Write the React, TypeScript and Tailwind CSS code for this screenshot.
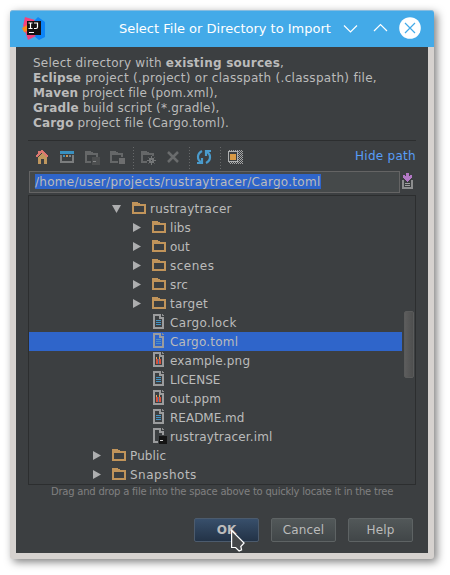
import React from 'react';

function IdeaLogo() {
  return (
    <svg width="24" height="24" viewBox="0 0 24 24" className="block shrink-0">
      <path d="M3 0l10 3-4 8-4 2-4-4z" fill="#f8417a" />
      <path d="M0 11l5-3v8l-3-1z" fill="#fc8b1c" />
      <path d="M12 4l4-4 7 5v15l-6 3-5-4z" fill="#0d84f6" />
      <path d="M3 14l6 2 5 3-8 4z" fill="#f0417f" />
      <rect x="5" y="4" width="14" height="14" fill="#151113" />
      <path d="M6.500 6h4M8.500 6v5.500M6.500 11.500h4M12 6h3.500v4q0 1.500-1.500 1.500h-2M7 15.500h5" stroke="#fff" strokeWidth="1.2" fill="none" />
    </svg>
  );
}

function Folder() {
  return (
    <svg width="14" height="12" viewBox="0 0 14 12" className="mb-px block shrink-0" shapeRendering="crispEdges">
      <path fillRule="evenodd" d="M0 0h6v1h2v1h6v10H0zM2 4v6h10V4z" fill="#c1945a" />
    </svg>
  );
}

type Kind = 'text' | 'image' | 'module';

function FileIcon({ kind, selected }: { kind: Kind; selected?: boolean }) {
  return (
    <svg width="15" height="16" viewBox="0 0 15 16" className="block shrink-0" shapeRendering="crispEdges">
      <path fillRule="evenodd" d="M0 0h8v3h3v12H0zM2 2v11h7V5H6V2z" fill="#9b9c9d" />
      <path d="M9 0h1v1h1v1H9z" fill="#8b8c8d" />
      {kind === 'text' && <path d="M3 6h5v1H3zM3 8h5v1H3zM3 10h5v1H3z" fill={selected ? '#4d8fc6' : '#4494c4'} />}
      {kind === 'image' && (
        <g>
          <path d="M3 7h2v5H3zM6 7h2v5H6z" fill="#d9513a" />
          <path d="M5 7h1v5H5z" fill="#3573a0" />
          <path d="M3 5h1v2H3zM6 5h1v2H6z" fill="#e5a65c" />
        </g>
      )}
      {kind === 'module' && (
        <g>
          <path d="M5 7h10v9H5z" fill="#3c3f41" />
          <path d="M6 8h8v8H6z" fill="#141414" />
          <path d="M7 12h3v1H7z" fill="#d0d0d0" />
        </g>
      )}
    </svg>
  );
}

function Arrow({ open }: { open?: boolean }) {
  return open ? (
    <svg width="9" height="8" viewBox="0 0 9 8" className="-ml-px mt-px block shrink-0"><path d="M0 0h9L4.5 8z" fill="#adaeaf" /></svg>
  ) : (
    <svg width="8" height="9" viewBox="0 0 8 9" className="block shrink-0"><path d="M0 0v9l8-4.5z" fill="#adaeaf" /></svg>
  );
}

function FolderRow({ name, className, open }: { name: string; className: string; open?: boolean }) {
  return (
    <div className={`flex h-[19px] items-center ${className}`}>
      <div className="w-[19px]"><Arrow open={open} /></div>
      <Folder />
      <span className="ml-1 pt-[2px] leading-[19px]">{name}</span>
    </div>
  );
}

function FileRow({ name, kind, selected, className = '' }: { name: string; kind: Kind; selected?: boolean; className?: string }) {
  return (
    <div className={`flex h-[19px] w-[373px] items-center pl-[124px] ${selected ? 'bg-[#2f65ca]' : ''}`}>
      <div className="w-[17px] pb-px"><FileIcon kind={kind} selected={selected} /></div>
      <span className={`pt-[2px] leading-[19px] ${className}`}>{name}</span>
    </div>
  );
}

function Toolbar() {
  return (
    <svg width="215" height="23" viewBox="0 0 215 23" className="block" shapeRendering="crispEdges">
      <g transform="translate(8 4)">
        <path d="M2 7l4-4 4 4h1v7H8V9H5v5H2z" fill="#bf975e" />
        <path d="M5 9h3v5H5z" fill="#3c3f41" />
        <path d="M2 1h2v4H2zM5 0h2v1h1v1h1v1h1v1h1v1h1v2h-2V6H9V5H8V4H7V3H5v1H4v1H3v1H2v1H0V5h1V4h1V3h1V2h1V1h1z" fill="#dd7770" />
      </g>
      <g transform="translate(32 5)">
        <path d="M0 0h14v3H0z" fill="#3990c0" />
        <path d="M0 4h2v6h10V4h2v8H0z" fill="#7b7d7e" />
        <path d="M3 4h2v2H3z" fill="#3990c0" /><path d="M6 4h2v2H6z" fill="#c1945a" /><path d="M9 4h2v2H9z" fill="#73868f" />
      </g>
      <g transform="translate(57 5)">
        <path d="M0 0h6v1h2v1h5v4h-2V4H2v6h4v2H0z" fill="#656768" />
        <path d="M7 6h8v8H7z" fill="#4d4f50" /><path d="M8 10h3v1H8z" fill="#858788" />
      </g>
      <g transform="translate(82 5)">
        <path d="M0 0h6v1h2v1h5v4h-2V4H2v6h6v2H0z" fill="#656768" />
        <path d="M9 7h6v6H9z" fill="#6d6e6f" />
      </g>
      <g transform="translate(113 5)">
        <path d="M0 0h6v1h2v1h5v3h-2V4H2v6h4v2H0z" fill="#656768" />
        <path d="M10.500 5v9M6 9.500h9M7.500 6.500l6 6M13.500 6.500l-6 6" stroke="#747677" strokeWidth="1" shapeRendering="auto" />
        <path d="M8 7h5v5H8z" fill="#747677" /><path d="M10 9h1v1h-1z" fill="#3c3f41" />
      </g>
      <path d="M140 6l10 10M150 6l-10 10" stroke="#6a6c6d" strokeWidth="2.5" shapeRendering="auto" />
      <g fill="none" stroke="#4a9bcc" strokeWidth="2.2" shapeRendering="auto">
        <path d="M173.500 16.500c-5-3-4.500-9 .5-11.500M169 17h5v-5M178.500 5.500c5 3 4.500 9-.5 11.500M183 5h-5v5" />
      </g>
      <g>
        {Array.from({ length: 14 }, (_, y) => (
          <path key={y} d={`M${201 + (y % 2)} ${4.5 + y}h14`} stroke="#a4a5a5" strokeDasharray="1 1" />
        ))}
        <path d="M200 5h10v11h-10z" fill="#aeb0b1" /><path d="M201 6h8v9h-8z" fill="#3c3f41" /><path d="M202 8h6v6h-6z" fill="#d99a45" />
      </g>
      <path d="M105.5 1v22M161.5 1v22M192.5 1v22" stroke="#67696a" strokeDasharray="1 2" />
    </svg>
  );
}

const button =
  'flex h-6 w-[65px] items-center justify-center rounded-[2px] border border-[#5e6364] bg-linear-to-b from-[#525859] to-[#414648] tracking-[0.1px]';

export default function App() {
  return (
    <div className="h-[575px] w-[450px] overflow-hidden bg-white pl-[10px] pt-[10px] font-['DejaVu_Sans',sans-serif] text-[12px] text-[#bbbbbb] whitespace-pre">
      <div className="relative flex h-[549px] w-[424px] flex-col rounded-[3px] bg-[#d6d2cf] shadow-[3px_3px_8px_0px_rgba(0,0,0,0.5)]">
        <div className="flex h-[37px] items-center rounded-t-[3px] border-t border-[#86bce0] bg-[#43aae8] pl-3 text-[13px] text-white">
          <IdeaLogo />
          <span className="ml-[73px] w-[214px]">Select File or Directory to Import</span>
          <svg width="90" height="24" viewBox="0 0 90 24" className="mb-[2px] block shrink-0" fill="none">
            <path d="M11 9.500l6.500 6.500 6.500-6.500M41 15l6.500-6.500L54 15" stroke="#fff" strokeWidth="1.2" />
            <circle cx="77" cy="12" r="10.800" fill="#fff" />
            <path d="M72 7l10 10M82 7L72 17" stroke="#43aae8" strokeWidth="1.2" />
          </svg>
        </div>
        <div className="mx-[6px] h-[506px] bg-[#3c3f41] pl-3">
          <div className="h-[93px] pl-[5px] pt-[9px] leading-[15px]">
            <div className="tracking-[0.235px]">Select directory with <b>existing sources</b>,</div>
            <div className="tracking-[0.29px]"><b className="tracking-[0.1px]">Eclipse</b> project (.project) or classpath (.classpath) file,</div>
            <div className="tracking-[0.1px]"><b>Maven</b> project file (pom.xml),</div>
            <div className="tracking-[0.2px]"><b>Gradle</b> build script (*.gradle),</div>
            <div className="tracking-[0.18px]"><b>Cargo</b> project file (Cargo.toml).</div>
          </div>
          <div className="h-px w-[388px] bg-[#2c2e2f]" />
          <div className="flex h-[30px] w-[388px] justify-between pt-[5px]">
            <Toolbar />
            <span className="leading-[20px] tracking-[0.28px] text-[#589df6]">Hide path</span>
          </div>
          <div className="flex h-6 pl-px">
            <div className="h-[22px] w-[371px] border border-[#646464] bg-[#45494a] p-[2px] pl-[5px] leading-4">
              <span className="inline-block h-[15px] bg-[#2f65ca] tracking-[0.28px]">/home/user/projects/rustraytracer/Cargo.toml</span>
            </div>
            <svg width="12" height="17" viewBox="0 0 12 17" className="ml-[2px] mt-[2px]" shapeRendering="crispEdges">
              <path d="M0 7h2v7h7V7h2v9H0z" fill="#8d8e8f" />
              <path d="M3 10h5v1H3zM3 12h5v1H3z" fill="#a0a1a1" />
              <path d="M4 0h3v3h1V2h2v3H9v1H8v1H7v1H6v1H5V8H4V7H3V6H2V5H1V2h2v1h1z" fill="#b278c5" />
            </svg>
          </div>
          <div className="flex h-[290px] w-[388px] justify-between border border-[#2c2e2f] pt-[3px]">
            <div className="w-[373px]">
              <FolderRow name="rustraytracer" className="pl-[84px] tracking-[0.23px]" open />
              <FolderRow name="libs" className="pl-[104px] tracking-[0.1px]" />
              <FolderRow name="out" className="pl-[104px]" />
              <FolderRow name="scenes" className="pl-[104px] tracking-[0.5px]" />
              <FolderRow name="src" className="pl-[104px] tracking-[0.15px]" />
              <FolderRow name="target" className="pl-[104px] tracking-[0.25px]" />
              <FileRow name="Cargo.lock" kind="text" className="tracking-[0.35px]" />
              <FileRow name="Cargo.toml" kind="text" className="tracking-[0.22px]" selected />
              <FileRow name="example.png" kind="image" className="tracking-[0.17px]" />
              <FileRow name="LICENSE" kind="text" />
              <FileRow name="out.ppm" kind="image" className="tracking-[0.1px]" />
              <FileRow name="README.md" kind="text" />
              <FileRow name="rustraytracer.iml" kind="module" className="tracking-[0.16px]" />
              <FolderRow name="Public" className="pl-[64px] tracking-[0.1px]" />
              <FolderRow name="Snapshots" className="pl-[64px] tracking-[0.5px]" />
            </div>
            <div className="mr-px mt-[112px] h-[67px] w-[10px] rounded-[2px] border border-[#5a5b5b] bg-linear-to-r from-[#5d5d5d] to-[#4e4f4f]" />
          </div>
          <div className="h-[33px] pl-[23px] text-[10px] leading-[14px] tracking-[-0.225px] text-[#808080]">Drag and drop a file into the space above to quickly locate it in the tree</div>
          <div className="flex gap-3 pl-[166px]">
            <button className="flex h-6 w-[65px] items-center justify-center rounded-[2px] border border-[#4c5b6d] bg-linear-to-b from-[#384f6b] to-[#233347] font-bold">OK</button>
            <button className={button}>Cancel</button>
            <button className={button}>Help</button>
          </div>
        </div>
        <svg width="14" height="23" viewBox="0 0 14 23" className="absolute left-[221px] top-[519px]">
          <path d="M.6 1.500v17h4l3.500 3.500 2.500-1.200-.8-3.300 3.300-3.500z" fill="#454749" stroke="#fff" strokeWidth="1.200" />
        </svg>
      </div>
    </div>
  );
}
